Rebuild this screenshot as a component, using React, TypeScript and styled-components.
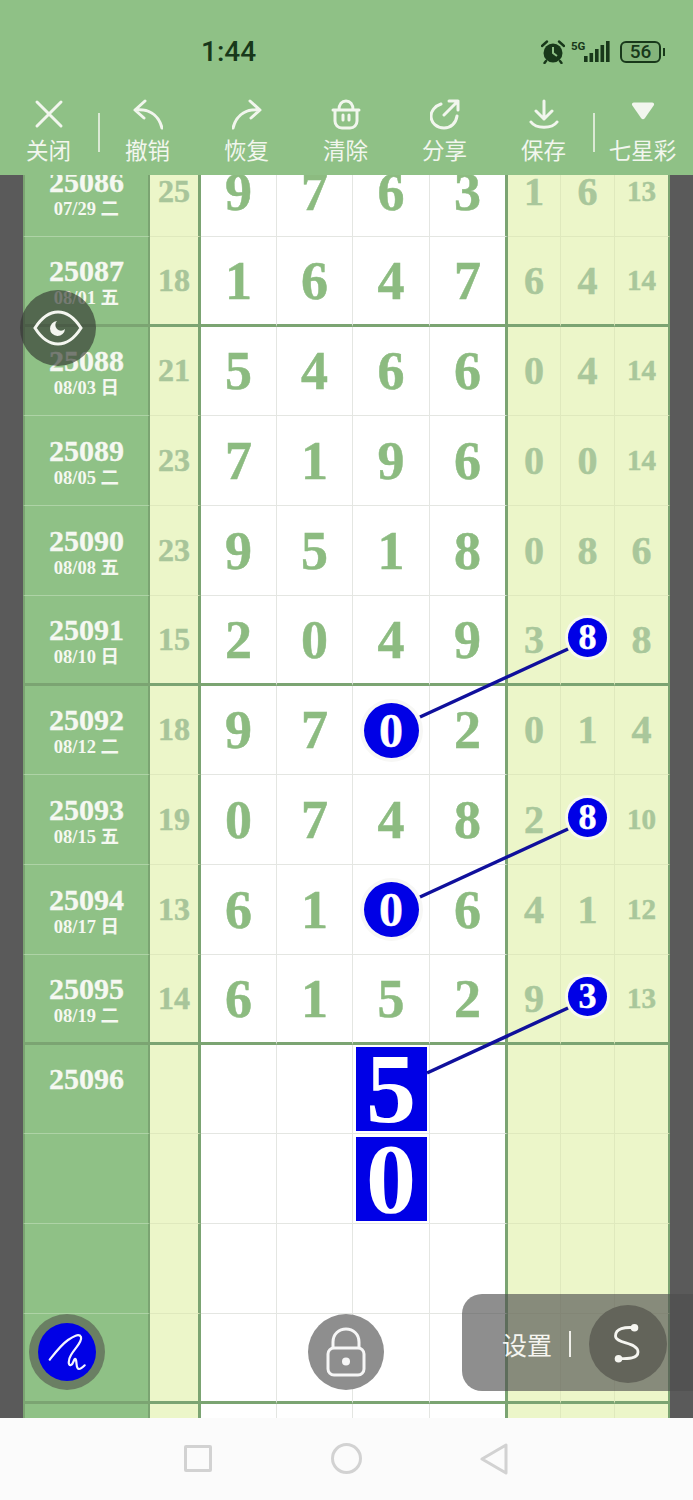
import React from 'react';
import styled, { createGlobalStyle } from 'styled-components';

const GREEN = '#8fc186';
const LINE = '#7ba472';
const NUM = '#8cbb80';
const SIDE_NUM = '#a9c79b';
const SIDE_BG = '#ecf6c9';
const BLUE = '#0000e6';
const SERIF = `'Liberation Serif', 'Noto Sans CJK SC', serif`;
const SANS = `'Noto Sans CJK SC', 'Noto Sans', sans-serif`;

const Global = createGlobalStyle`
  html, body { margin: 0; padding: 0; background: #fff; }
  * { box-sizing: border-box; }
`;

const Phone = styled.div`
  width: 693px;
  height: 1500px;
  display: flex;
  flex-direction: column;
  overflow: hidden;
  font-family: ${SANS};
`;

const Header = styled.header`
  height: 175px;
  flex: none;
  background: ${GREEN};
  position: relative;
  z-index: 2;
`;

const StatusBar = styled.div`
  height: 98px;
  padding: 38px 28px 0 201px;
  display: flex;
  justify-content: space-between;
  align-items: flex-start;
  color: #18381a;
`;

const Time = styled.span`
  font: 500 28px/28px Roboto, sans-serif;
`;

const StatusIcons = styled.div`
  display: flex;
  align-items: center;
  height: 28px;
  gap: 6px;
`;

const NetworkType = styled.span`
  width: 16px;
  font: 700 11.5px/12px Roboto, sans-serif;
  align-self: flex-start;
  margin: 2px -9px 0 0;
`;

const Battery = styled.div`
  width: 41px;
  height: 22px;
  border: 2px solid #18381a;
  border-radius: 6px;
  background: #84b47b;
  font: 500 19px/18px Roboto, sans-serif;
  text-align: center;
  position: relative;
  margin: 0 4px 0 3px;
  &::after {
    content: '';
    position: absolute;
    right: -6px;
    top: 5px;
    width: 2px;
    height: 8px;
    background: #18381a;
  }
`;

const Toolbar = styled.nav`
  display: grid;
  grid-template-columns: repeat(7, 99px);
  margin-left: -1px;
`;

const ToolItem = styled.div<{ $sep?: boolean }>`
  position: relative;
  display: flex;
  flex-direction: column;
  align-items: center;
  color: #f2f6ee;
  font-size: 22.5px;
  line-height: 30px;
  white-space: nowrap;
  svg { display: block; height: 32px; margin-bottom: 4px; }
  &::after {
    content: '';
    display: ${({ $sep }) => ($sep ? 'block' : 'none')};
    position: absolute;
    right: -2px;
    top: 15px;
    width: 2px;
    height: 39px;
    background: #dbe9d5;
  }
`;

const ArrowSvg = styled.svg<{ $flip?: boolean }>`
  transform: ${({ $flip }) => ($flip ? 'scaleX(-1)' : 'none')};
`;

const Chart = styled.main`
  flex: 1;
  min-height: 0;
  position: relative;
  overflow: hidden;
  background: #5a5a5a;
  padding: 0 23px;
`;

const Rows = styled.div`
  margin-top: -28px;
`;

const Row = styled.div`
  display: grid;
  grid-template-columns: 127px 51px 76px 76px 77px 78px 53px 54px 55px;
  height: 89.75px;
`;

const Cell = styled.div<{ $heavy?: boolean }>`
  display: flex;
  align-items: center;
  justify-content: center;
  font-family: ${SERIF};
  font-weight: 700;
  -webkit-text-stroke: 0.5px currentColor;
  border-bottom: ${({ $heavy }) => ($heavy ? `3px solid ${LINE}` : '1px solid #e4e6e2')};
`;

const IssueCell = styled(Cell)`
  flex-direction: column;
  background: ${GREEN};
  color: #f5f8f1;
  border-left: 2px solid ${LINE};
  border-right: 2px solid ${LINE};
  border-bottom-color: ${({ $heavy }) => ($heavy ? LINE : '#aed3a6')};
  padding-top: 5px;
  -webkit-text-stroke: 0.3px currentColor;
`;

const Issue = styled.span`
  font-size: 30px;
  line-height: 30px;
`;

const IssueDate = styled.span`
  font-size: 18.5px;
  line-height: 24px;
  height: 24px;
  -webkit-text-stroke: 0;
`;

const SumCell = styled(Cell)`
  background: ${SIDE_BG};
  color: #a8c59a;
  font-size: 32px;
  border-right: 3px solid ${LINE};
  border-bottom-color: ${({ $heavy }) => ($heavy ? LINE : '#dfe9bd')};
`;

const MainCell = styled(Cell)<{ $last?: boolean }>`
  background: #fff;
  color: ${NUM};
  font-size: 54px;
  padding-top: 1px;
  border-right: ${({ $last }) => ($last ? `3px solid ${LINE}` : '1px solid #e4e6e2')};
`;

const SideCell = styled(Cell)<{ $small?: boolean; $end?: boolean }>`
  background: ${SIDE_BG};
  color: ${SIDE_NUM};
  font-size: ${({ $small }) => ($small ? '29px' : '40px')};
  border-right: ${({ $end }) => ($end ? `2px solid ${LINE}` : '1px solid #dfe9bd')};
  border-bottom-color: ${({ $heavy }) => ($heavy ? LINE : '#dfe9bd')};
`;

const BigBall = styled.span`
  width: 55px;
  height: 55px;
  border-radius: 50%;
  background: ${BLUE};
  color: #fff;
  font-size: 48px;
  line-height: 55px;
  text-align: center;
  box-shadow: 0 0 0 4px #f7f7f5;
  position: relative;
  z-index: 1;
`;

const SmallBall = styled.span`
  width: 39px;
  height: 39px;
  border-radius: 50%;
  background: ${BLUE};
  color: #fff;
  font-size: 36px;
  line-height: 39px;
  text-align: center;
  box-shadow: 0 0 0 3px #f7f9ee;
  margin-top: -4px;
  position: relative;
  z-index: 1;
`;

const Pick = styled.span`
  width: 71px;
  height: 84px;
  background: ${BLUE};
  color: #fff;
  font-size: 100px;
  line-height: 84px;
  text-align: center;
  -webkit-text-stroke: 0;
  position: relative;
  z-index: 1;
`;

const Links = styled.svg`
  position: absolute;
  left: 0;
  top: 0;
  width: 693px;
  height: 1243px;
  z-index: 2;
  pointer-events: none;
`;

const RoundButton = styled.button<{ $left: number; $top: number; $bg: string }>`
  position: absolute;
  left: ${({ $left }) => $left}px;
  top: ${({ $top }) => $top}px;
  width: 76px;
  height: 76px;
  padding: 0;
  border: none;
  border-radius: 50%;
  background: ${({ $bg }) => $bg};
  display: flex;
  align-items: center;
  justify-content: center;
  z-index: 3;
`;

const SketchDisc = styled.span`
  width: 58px;
  height: 58px;
  border-radius: 50%;
  background: ${BLUE};
  display: block;
  svg { display: block; }
`;

const SettingsPill = styled.div`
  position: absolute;
  right: 0;
  top: 1119px;
  width: 231px;
  height: 97px;
  border-radius: 20px 0 0 20px;
  background: rgba(78, 78, 78, 0.64);
  display: flex;
  align-items: center;
  padding-left: 40px;
  color: #f5f5f0;
  font-size: 25px;
  z-index: 3;
`;

const SettingsLabel = styled.span`
  margin-top: 3px;
`;

const SettingsDivider = styled.span`
  width: 2px;
  height: 26px;
  margin: 3px 18px 0 17px;
  background: #f0f0ea;
`;

const SettingsKnob = styled.span`
  width: 78px;
  height: 78px;
  border-radius: 50%;
  background: #63645a;
  display: block;
  margin-top: 2px;
  svg { display: block; }
`;

const NavBar = styled.footer`
  height: 82px;
  flex: none;
  background: #fbfbfb;
  display: flex;
  align-items: center;
  padding: 0 0 1px 184px;
  position: relative;
  z-index: 2;
`;

const NavSquare = styled.span`
  width: 28px;
  height: 27px;
  border: 3px solid #d2d2d2;
  border-radius: 2px;
`;

const NavCircle = styled.span`
  width: 31px;
  height: 31px;
  border: 3px solid #d2d2d2;
  border-radius: 50%;
  margin: 0 118px 0 119px;
`;

type Line = {
  id: string;
  date?: string;
  sum?: number;
  main?: number[];
  side?: number[];
  mainBall?: number;
  sideBall?: number;
  pick?: number;
};

const lines: Line[] = [
  { id: '25086', date: '07/29 二', sum: 25, main: [9, 7, 6, 3], side: [1, 6, 13] },
  { id: '25087', date: '08/01 五', sum: 18, main: [1, 6, 4, 7], side: [6, 4, 14] },
  { id: '25088', date: '08/03 日', sum: 21, main: [5, 4, 6, 6], side: [0, 4, 14] },
  { id: '25089', date: '08/05 二', sum: 23, main: [7, 1, 9, 6], side: [0, 0, 14] },
  { id: '25090', date: '08/08 五', sum: 23, main: [9, 5, 1, 8], side: [0, 8, 6] },
  { id: '25091', date: '08/10 日', sum: 15, main: [2, 0, 4, 9], side: [3, 8, 8], sideBall: 1 },
  { id: '25092', date: '08/12 二', sum: 18, main: [9, 7, 0, 2], side: [0, 1, 4], mainBall: 2 },
  { id: '25093', date: '08/15 五', sum: 19, main: [0, 7, 4, 8], side: [2, 8, 10], sideBall: 1 },
  { id: '25094', date: '08/17 日', sum: 13, main: [6, 1, 0, 6], side: [4, 1, 12], mainBall: 2 },
  { id: '25095', date: '08/19 二', sum: 14, main: [6, 1, 5, 2], side: [9, 3, 13], sideBall: 1 },
  { id: '25096', pick: 5 },
  { id: '', pick: 0 },
  { id: '' },
  { id: '' },
  { id: '' },
];

const IconClose = () => (
  <svg width="30" height="32" viewBox="0 0 30 32" fill="none" stroke="#f2f6ee" strokeWidth="3" strokeLinecap="round">
    <path d="M3 4 L27 28 M27 4 L3 28" />
  </svg>
);

const IconUndo = ({ flip }: { flip?: boolean }) => (
  <ArrowSvg $flip={flip} width="30" height="32" viewBox="0 0 30 32" fill="none" stroke="#f2f6ee" strokeWidth="3" strokeLinecap="round" strokeLinejoin="round">
    <path d="M12 3 L2 12 L11 20 M3 12 C14 11 25 15 29 30" />
  </ArrowSvg>
);

const IconClear = () => (
  <svg width="30" height="32" viewBox="0 0 30 32" fill="none" stroke="#f2f6ee" strokeWidth="3" strokeLinecap="round" strokeLinejoin="round">
    <path d="M2 12 H28 M8 12 C8 6 11 3 15 3 C19 3 22 6 22 12 M4 12 V23 C4 27 7 30 11 30 H19 C23 30 26 27 26 23 V12 M12 17 V22 M18 17 V22" />
  </svg>
);

const IconShare = () => (
  <svg width="30" height="32" viewBox="0 0 30 32" fill="none" stroke="#f2f6ee" strokeWidth="3" strokeLinecap="round" strokeLinejoin="round">
    <path d="M11 6 C5 8 1 13 1 18 C1 25 7 30 14 30 C21 30 26 25 27 18 M14 17 L28 3 M19 3 H28 V12" />
  </svg>
);

const IconSave = () => (
  <svg width="30" height="32" viewBox="0 0 30 32" fill="none" stroke="#f2f6ee" strokeWidth="3" strokeLinecap="round" strokeLinejoin="round">
    <path d="M15 3 V21 M7 13 L15 21 L23 13 M2 24 C7 31 23 31 28 24" />
  </svg>
);

const IconDown = () => (
  <svg width="30" height="32" viewBox="0 0 30 32" fill="#f2f6ee">
    <path d="M4 7 Q3.5 4.5 6 4.5 H24 Q26.500 4.500 26 7 L17 20 Q15 22.500 13 20 Z" />
  </svg>
);

const IconAlarm = () => (
  <svg width="24" height="24" viewBox="0 0 24 24" fill="#18381a">
    <circle cx="12" cy="13" r="9.500" />
    <path d="M1 6 L6 1.500 M23 6 L18 1.500 M5 21 L3.500 23 M19 21 L20.500 23" stroke="#18381a" strokeWidth="2.4" strokeLinecap="round" />
    <path d="M12 7 V13 L16 16" stroke={GREEN} strokeWidth="2" fill="none" />
  </svg>
);

const IconSignal = () => (
  <svg width="27" height="22" viewBox="0 0 27 22" fill="#18381a">
    <path d="M0 15 h3.600 v6 h-3.600 z M5.500 12 h3.600 v9 h-3.600 z M11 8 h3.600 v13 h-3.600 z M16.500 4 h3.600 v17 h-3.600 z M22 0 h3.600 v21 h-3.600 z" />
  </svg>
);

const IconEye = () => (
  <svg width="50" height="36" viewBox="0 0 50 36" fill="none" stroke="#f4f6f0" strokeWidth="3">
    <path d="M2 18 C9 7 17 2 25 2 C33 2 41 7 48 18 C41 29 33 34 25 34 C17 34 9 29 2 18 Z" />
    <path d="M24 11 A7.500 7.500 0 1 0 32 19 A5 5 0 0 1 24 11 Z" fill="#f4f6f0" stroke="none" />
  </svg>
);

const IconSketch = () => (
  <svg width="58" height="58" viewBox="0 0 58 58" fill="none" stroke="#f4f4ff" strokeWidth="2.200" strokeLinecap="round" strokeLinejoin="round">
    <path d="M11.700 36.700 C17 30 23 22 30 17 C35 13.500 41 10 43 14 C44.500 19 37 25 33 32 C30 37 30 43 33 42 C36 41 36 33 38 37 C39 41 38 46 41 46 C43 46 45 44 46.700 42.300" />
  </svg>
);

const IconLock = () => (
  <svg width="40" height="50" viewBox="0 0 40 50" fill="none" stroke="#f6f6f6" strokeWidth="3" strokeLinejoin="round">
    <path d="M7 22 V15 C7 7 13 2 20 2 C27 2 33 7 33 15 V22" />
    <rect x="2" y="21" width="36" height="27" rx="6" />
    <circle cx="20" cy="34.500" r="4" fill="#f6f6f6" stroke="none" />
  </svg>
);

const IconCurve = () => (
  <svg width="78" height="78" viewBox="0 0 78 78" fill="none" stroke="#f5f5f0" strokeWidth="2.800" strokeLinecap="round">
    <path d="M45.300 22.700 C36 22 26.500 23 26.500 31 C26.500 39 49 37 49 47 C49 54 38 53.700 29.300 53.700" />
    <circle cx="45.500" cy="22.700" r="3.800" fill="#f5f5f0" stroke="none" />
    <circle cx="29.500" cy="53.700" r="3.800" fill="#f5f5f0" stroke="none" />
  </svg>
);

const NavBack = () => (
  <svg width="28" height="32" viewBox="0 0 28 32" fill="none" stroke="#d2d2d2" strokeWidth="3" strokeLinejoin="round">
    <path d="M26 2 V30 L2 16 Z" />
  </svg>
);

const tools = [
  { label: '关闭', icon: <IconClose />, sep: true },
  { label: '撤销', icon: <IconUndo /> },
  { label: '恢复', icon: <IconUndo flip /> },
  { label: '清除', icon: <IconClear /> },
  { label: '分享', icon: <IconShare /> },
  { label: '保存', icon: <IconSave />, sep: true },
  { label: '七星彩', icon: <IconDown /> },
];

export default function App() {
  return (
    <Phone>
      <Global />
      <Header>
        <StatusBar>
          <Time>1:44</Time>
          <StatusIcons>
            <IconAlarm />
            <NetworkType>5G</NetworkType>
            <IconSignal />
            <Battery>56</Battery>
          </StatusIcons>
        </StatusBar>
        <Toolbar>
          {tools.map(t => (
            <ToolItem key={t.label} $sep={t.sep}>
              {t.icon}
              {t.label}
            </ToolItem>
          ))}
        </Toolbar>
      </Header>

      <Chart>
        <Rows>
          {lines.map((line, i) => {
            const heavy = i % 4 === 1;
            return (
              <Row key={i}>
                <IssueCell $heavy={heavy}>
                  <Issue>{line.id}</Issue>
                  <IssueDate>{line.date}</IssueDate>
                </IssueCell>
                <SumCell $heavy={heavy}>{line.sum}</SumCell>
                {[0, 1, 2, 3].map(c => (
                  <MainCell key={c} $heavy={heavy} $last={c === 3}>
                    {line.mainBall === c ? (
                      <BigBall>{line.main?.[c]}</BigBall>
                    ) : line.pick !== undefined && c === 2 ? (
                      <Pick>{line.pick}</Pick>
                    ) : (
                      line.main?.[c]
                    )}
                  </MainCell>
                ))}
                {[0, 1, 2].map(c => {
                  const value = line.side?.[c];
                  return (
                    <SideCell key={c} $heavy={heavy} $end={c === 2} $small={value !== undefined && value > 9}>
                      {line.sideBall === c ? <SmallBall>{value}</SmallBall> : value}
                    </SideCell>
                  );
                })}
              </Row>
            );
          })}
        </Rows>

        <Links viewBox="0 0 693 1243">
          <g stroke="#10109c" strokeWidth="3.500">
            <path d="M420 542 L568 474" />
            <path d="M420 722 L568 654" />
            <path d="M427 898 L568 833" />
          </g>
        </Links>

        <RoundButton $left={20} $top={115} $bg="rgba(52, 58, 50, 0.66)">
          <IconEye />
        </RoundButton>
        <RoundButton $left={29} $top={1139} $bg="#6a7f63">
          <SketchDisc>
            <IconSketch />
          </SketchDisc>
        </RoundButton>
        <RoundButton $left={308} $top={1139} $bg="#8e8e8e">
          <IconLock />
        </RoundButton>
        <SettingsPill>
          <SettingsLabel>设置</SettingsLabel>
          <SettingsDivider />
          <SettingsKnob>
            <IconCurve />
          </SettingsKnob>
        </SettingsPill>
      </Chart>

      <NavBar>
        <NavSquare />
        <NavCircle />
        <NavBack />
      </NavBar>
    </Phone>
  );
}
